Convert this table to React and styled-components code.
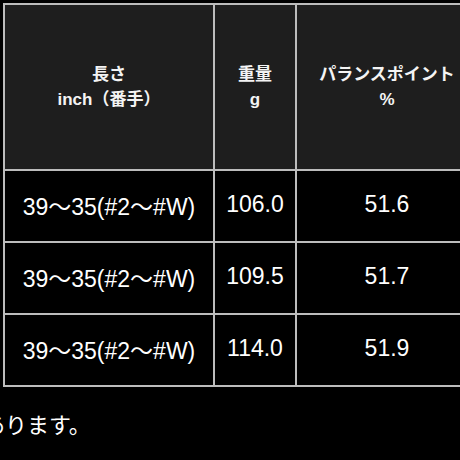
import React from "react"
import styled, { createGlobalStyle } from 'styled-components'

const GlobalStyle = createGlobalStyle`
    html, body {
        margin: 0;
        padding: 0;
        background: #000;
    }
    body {
        font-family: "Liberation Sans", "Noto Sans CJK JP", sans-serif;
        color: #fff;
    }
`

const filas = [
    { largo: '39〜35(#2〜#W)', peso: '106.0', balance: '51.6' },
    { largo: '39〜35(#2〜#W)', peso: '109.5', balance: '51.7' },
    { largo: '39〜35(#2〜#W)', peso: '114.0', balance: '51.9' },
]

export default function App() {
    return (
        <Page>
            <GlobalStyle />
            <Tabla>
                <colgroup>
                    <col style={{ width: 210 }} />
                    <col style={{ width: 82 }} />
                    <col style={{ width: 182 }} />
                </colgroup>
                <thead>
                    <tr>
                        <Th>長さ<br />inch（番手）</Th>
                        <Th>重量<br />g</Th>
                        <Th>パランスポイント<br />%</Th>
                    </tr>
                </thead>
                <tbody>
                    {filas.map((fila, i) => (
                        <tr key={i}>
                            <Td>{fila.largo}</Td>
                            <Td>{fila.peso}</Td>
                            <Td>{fila.balance}</Td>
                        </tr>
                    ))}
                </tbody>
            </Tabla>
            <Nota>があります。</Nota>
        </Page>
    )
}

const Page = styled.div`
    width: 460px;
    height: 460px;
    overflow: hidden;
    padding: 3px 0 0 3px;
    box-sizing: border-box;
`

const Tabla = styled.table`
    border-collapse: collapse;
    table-layout: fixed;
    width: 474px;
    border-top: 2px solid #bcbcbc;
    border-left: 2px solid #bcbcbc;
`

const Th = styled.th`
    background-color: #1e1e1e;
    height: 164px;
    padding: 0;
    border-right: 2px solid #bcbcbc;
    border-bottom: 2px solid #bcbcbc;
    font-family: "Liberation Sans", "Noto Sans CJK JP", sans-serif;
    font-size: 17px;
    font-weight: bold;
    line-height: 25px;
    text-align: center;
    vertical-align: middle;
    color: #f4f4f4;
`

const Td = styled.td`
    background-color: #000;
    height: 67px;
    padding: 0 0 3px;
    border-right: 2px solid #bcbcbc;
    border-bottom: 2px solid #bcbcbc;
    font-family: "Liberation Sans", "Noto Sans CJK JP", sans-serif;
    font-size: 23px;
    text-align: center;
    vertical-align: middle;
    color: #fff;
`

const Nota = styled.p`
    margin: 20px 0 0 -42px;
    font-family: "Noto Sans CJK JP", sans-serif;
    font-size: 22px;
    line-height: 32px;
    color: #fff;
    white-space: nowrap;
`
